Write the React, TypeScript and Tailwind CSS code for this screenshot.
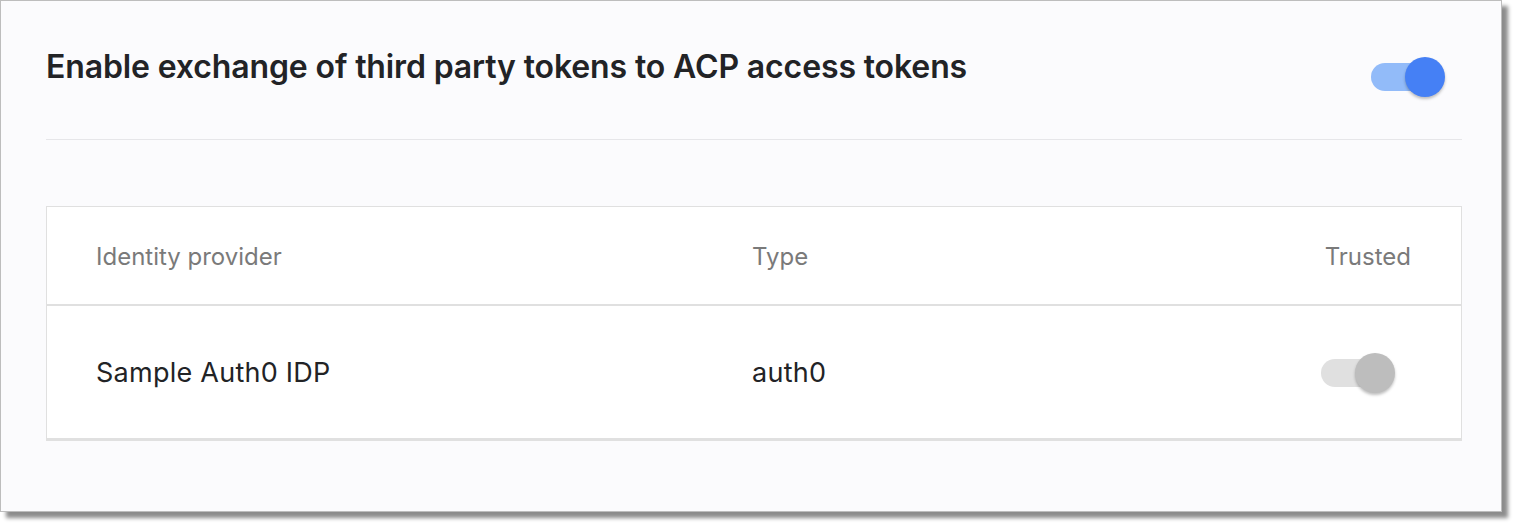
function Toggle({ on }: { on: boolean }) {
  return (
    <div className="relative w-[74px] h-[40px]">
      <div
        className={`absolute left-0 top-[6px] w-[66px] h-[28px] rounded-full ${
          on ? "bg-[#92bbf9]" : "bg-[#e0e0e0]"
        }`}
      ></div>
      <div
        className={`absolute right-0 top-0 w-[40px] h-[40px] rounded-full shadow-[0_2px_3px_rgba(0,0,0,0.25)] ${
          on ? "bg-[#4580f5]" : "bg-[#bdbdbd]"
        }`}
      ></div>
    </div>
  );
}

export default function App() {
  return (
    <div className="w-[1517px] h-[527px] bg-white font-['Inter',sans-serif]">
      <div className="w-[1502px] h-[512px] border border-[#bdbdbd] bg-[#fbfbfd] shadow-[6px_6px_4px_rgba(0,0,0,0.45)] pl-[45px] pr-[39px]">
        <div className="h-[139px] border-b border-[#e6e6e9] flex justify-between items-start">
          <h1 className="pt-[46px] text-[32px] leading-[40px] font-semibold text-[#222326] tracking-[-0.13px]">
            Enable exchange of third party tokens to ACP access tokens
          </h1>
          <div className="mt-[56px] mr-[17px]">
            <Toggle on={true} />
          </div>
        </div>

        <div className="mt-[66px] bg-white border border-[#e0e0e0] border-b-[3px]">
          <div className="h-[99px] pt-[2px] border-b-2 border-[#e0e0e0] flex items-center pl-[49px] pr-[50px] text-[24px] text-[#7a7a7a]">
            <div className="w-[656px]">Identity provider</div>
            <div className="flex-1">Type</div>
            <div>Trusted</div>
          </div>
          <div className="h-[132px] pt-[2px] flex items-center pl-[49px] pr-[66px] text-[27px] tracking-[0.25px] text-[#222326]">
            <div className="w-[656px]">Sample Auth0 IDP</div>
            <div className="flex-1">auth0</div>
            <Toggle on={false} />
          </div>
        </div>
      </div>
    </div>
  );
}
